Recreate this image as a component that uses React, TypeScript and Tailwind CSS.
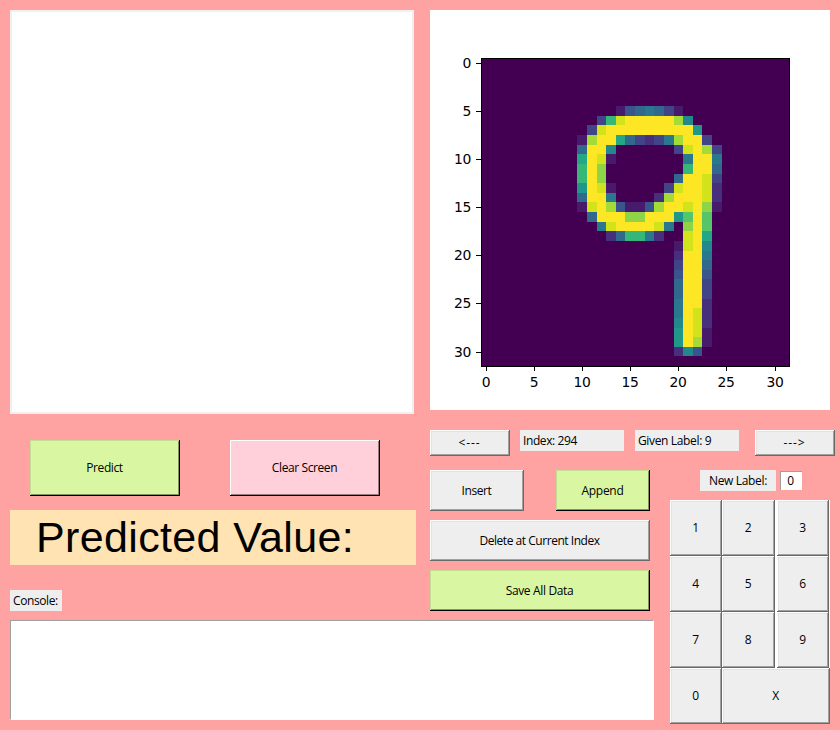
import type { ReactNode } from "react";

const VIRIDIS = [
  "#430052", "#481a6c", "#472f7d", "#414487", "#39568c", "#31688e", "#2a788e", "#23888e",
  "#1f988b", "#22a884", "#35b779", "#54c568", "#8fd446", "#a5db36", "#d2e21b", "#fde725",
];

// Intensities of the sample, one hex digit per cell, from column 10 / row 5.
const FIRST_COLUMN = 10;
const FIRST_ROW = 5;
const CELL = 9.625;
const DIGIT = [
  "000014565310000",
  "003aefffffd7000",
  "03efffffffff800",
  "1dff953236dff30",
  "5ff70000003efd3",
  "9fe100000006ff6",
  "afc00000000aff5",
  "afc00000005ffe3",
  "8fe1000003effe2",
  "5ff600002dfffe2",
  "1efd4114dffefc1",
  "05fffccfff8bfb0",
  "006effffe60cfb0",
  "00025aa6200ef90",
  "00000000001ef70",
  "00000000002ff60",
  "00000000003ff50",
  "00000000004ff40",
  "00000000005ff30",
  "00000000005ff30",
  "00000000006ff20",
  "00000000006fe20",
  "00000000007fe20",
  "00000000008fe10",
  "00000000008fd10",
  "000000000027400",
];
const TICKS = [0, 5, 10, 15, 20, 25, 30];

function Plot() {
  return (
    <svg width="400" height="400" viewBox="430 10 400 400" className="block bg-white font-['DejaVu_Sans',sans-serif] text-[13.9px]">
      <rect x="481" y="58" width="309" height="309" fill="#430052" />
      <g shapeRendering="crispEdges">
        {DIGIT.map((row, r) =>
          [...row].map((v, c) =>
            v === "0" ? null : (
              <rect
                key={`${r}-${c}`}
                x={481 + (FIRST_COLUMN + c) * CELL}
                y={58 + (FIRST_ROW + r) * CELL}
                width={CELL}
                height={CELL}
                fill={VIRIDIS[parseInt(v, 16)]}
              />
            ),
          ),
        )}
      </g>
      <rect x="481.5" y="58.5" width="308" height="308" fill="none" stroke="#000" />
      {TICKS.map((t) => {
        const x = Math.floor(486.3 + t * CELL) + 0.5;
        const y = Math.floor(63.3 + t * CELL) + 0.5;
        return (
          <g key={t}>
            <path d={`M${x} 367v4M481 ${y}h-5`} stroke="#000" />
            <text x={x - 0.6} y="387" textAnchor="middle">{t}</text>
            <text x="471" y={y + 4.7} textAnchor="end">{t}</text>
          </g>
        );
      })}
    </svg>
  );
}

const TONES = {
  gray: "bg-[#eeeeee] shadow-[inset_-1px_-1px_#696969,inset_1px_1px_#ffffff,inset_-2px_-2px_#a0a0a0,inset_2px_2px_#e3e3e3]",
  green: "bg-[#d9f7a3] shadow-[inset_-1px_-1px_#000000,inset_1px_1px_#c3de93,inset_-2px_-2px_#82945f]",
  pink: "bg-[#ffcfda] shadow-[inset_-1px_-1px_#000000,inset_1px_1px_#ffffff,inset_-2px_-2px_#997b82]",
};

function Button({ tone = "gray", className, children }: { tone?: keyof typeof TONES; className: string; children: ReactNode }) {
  return <button className={`flex shrink-0 items-center justify-center pr-px ${TONES[tone]} ${className}`}>{children}</button>;
}

function Label({ className, children }: { className: string; children: ReactNode }) {
  return <div className={`flex h-[21px] shrink-0 items-center bg-[#eeeeee] ${className}`}>{children}</div>;
}

export default function App() {
  return (
    <main className="grid h-[730px] w-[840px] grid-cols-[420px_240px_180px] grid-rows-[420px_40px_160px_110px] overflow-hidden bg-[#ffa3a2] font-['Open_Sans','Noto_Sans',sans-serif] text-[12px] leading-4 tracking-[-0.4px] whitespace-nowrap text-black">
      <section className="pt-2.5 pl-2.5">
        <div className="h-[404px] w-[404px] border-2 border-[#f0f0f0] bg-white" />
      </section>

      <section className="col-span-2 pt-2.5 pl-2.5">
        <Plot />
      </section>

      <section className="row-span-2 flex flex-col pt-5 pl-2.5">
        <div className="flex gap-[50px] pl-5">
          <Button tone="green" className="h-14 w-[150px]">Predict</Button>
          <Button tone="pink" className="h-14 w-[150px]">Clear Screen</Button>
        </div>
        <div className="mt-3.5 flex h-[55px] w-[406px] items-center bg-[#ffe3b3] pl-[26px] font-['Liberation_Sans',Arial,sans-serif] text-[43px] leading-none tracking-[0.36px]">
          Predicted Value:
        </div>
        <Label className="mt-[25px] w-[52px] pl-[3px]">Console:</Label>
      </section>

      <nav className="col-span-2 flex items-start pt-2.5 pl-2.5">
        <Button className="h-[26px] w-20 tracking-[0.9px]">&lt;---</Button>
        <Label className="ml-2.5 w-[104px] pl-[3px]">Index: 294</Label>
        <Label className="ml-[11px] w-[104px] pl-[3px] tracking-[-0.35px]">Given Label: 9</Label>
        <Button className="ml-4 h-[26px] w-20 tracking-[0.9px]">---&gt;</Button>
      </nav>

      <section className="flex flex-col gap-[9px] pt-2.5 pl-2.5">
        <div className="flex gap-8">
          <Button className="h-[41px] w-[94px]">Insert</Button>
          <Button tone="green" className="h-[41px] w-[94px] tracking-[-0.3px]">Append</Button>
        </div>
        <Button className="h-[41px] w-[220px] tracking-[-0.46px]">Delete at Current Index</Button>
        <Button tone="green" className="h-[41px] w-[220px] tracking-[-0.35px]">Save All Data</Button>
      </section>

      <section className="row-span-2 pt-2.5 pl-2.5">
        <div className="flex h-[30px] items-start gap-1 pl-[30px]">
          <Label className="w-[76px] justify-center tracking-[-0.35px]">New Label:</Label>
          <div className="mt-px flex h-[19px] w-[22px] items-center justify-center border-t border-l border-[#a0a0a0] bg-white pr-0.5">0</div>
        </div>
        <div className="grid h-56 w-40 grid-cols-[52px_53px_1px_54px] grid-rows-4 bg-white">
          {["1", "2", "3", "4", "5", "6", "7", "8", "9"].map((n, i) => (
            <Button key={n} className={i % 3 === 2 ? "col-span-2 ml-0.5 w-[52px]" : i % 3 === 1 ? "w-[53px]" : "w-[52px]"}>{n}</Button>
          ))}
          <Button className="w-[52px]">0</Button>
          <Button className="col-span-3 w-[108px]">X</Button>
        </div>
      </section>

      <section className="col-span-2 pl-2.5">
        <div className="h-[100px] w-[644px] border border-t-[#a0a0a0] border-r-white border-b-white border-l-[#a0a0a0] bg-white" />
      </section>
    </main>
  );
}
